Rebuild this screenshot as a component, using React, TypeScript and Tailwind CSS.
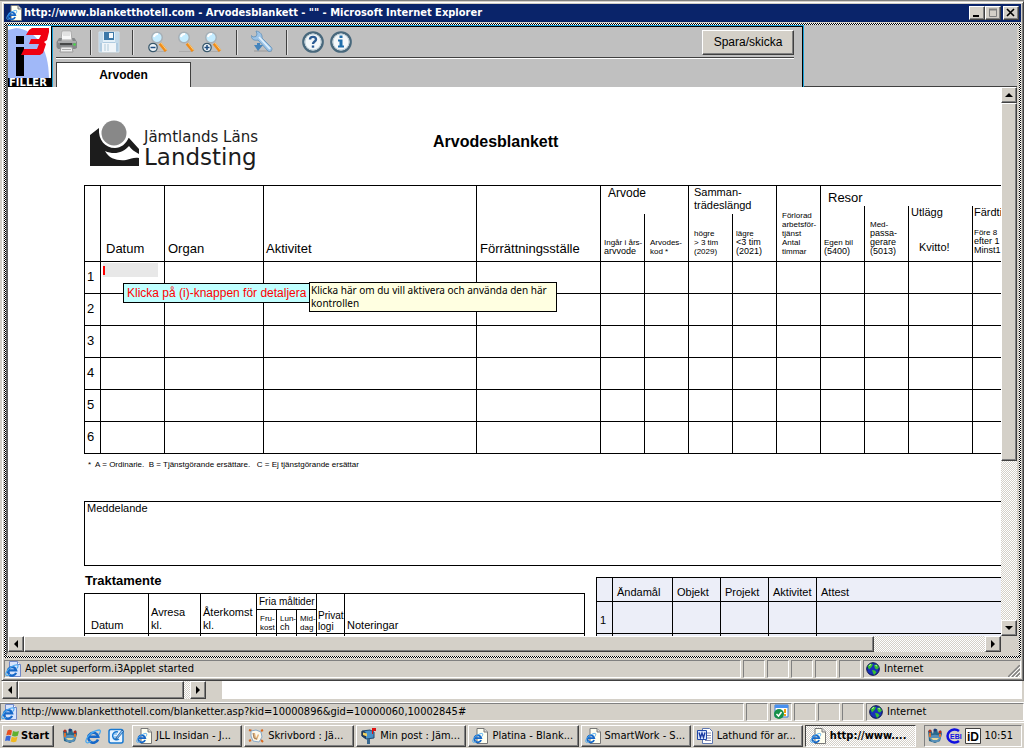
import { clsx } from 'clsx'
import type { ReactNode } from 'react'

const raised =
  'border border-t-white border-l-white border-r-[#404040] border-b-[#404040] bg-[#d4d0c8] shadow-[inset_-1px_-1px_0_#808080]'
const sunken = 'border border-t-[#808080] border-l-[#808080] border-r-white border-b-white'
const hatch = 'bg-[repeating-conic-gradient(#000_0_25%,#fff_0_50%)] bg-[length:2px_2px]'
const track = 'bg-[repeating-conic-gradient(#d4d0c8_0_25%,#fff_0_50%)] bg-[length:2px_2px]'
const cell = 'border-r border-b border-black p-0 font-normal text-left'

function IeIcon({ page = 'small' }: { page?: 'small' | 'large' | 'none' }) {
  return (
    <svg viewBox="0 0 16 16" className="size-4 shrink-0">
      {page === 'small' && (
        <>
          <path d="M5 .5h7l3.500 3.500v11.500H5z" fill="#fffff0" stroke="#777" />
          <path d="M12 .5V4h3.500" fill="#ddd" stroke="#777" />
        </>
      )}
      {page === 'large' && (
        <>
          <path d="M4.500.5h8l3 3v12h-11z" fill="#d8e4fc" stroke="#7088c8" />
          <path d="M12.500.5v3h3" fill="#fff" stroke="#7088c8" />
        </>
      )}
      <g transform={page === 'small' ? 'translate(0 4) scale(.7)' : page === 'large' ? 'translate(0 2) scale(.85)' : undefined}>
        <path d="M13 11.500A5 5 0 1 1 13.200 8.700H4.500" fill="none" stroke="#1668c8" strokeWidth="2.600" />
        <path
          d="M1.500 14.500C-1 12 6 3 14 2M14 2c2 0 1.500 2.500 0 4.500M1.500 14.500c1 .8 3-.2 4.500-1.500"
          fill="none"
          stroke="#48a8f0"
          strokeWidth="1.300"
        />
      </g>
    </svg>
  )
}

function Globe() {
  return (
    <svg viewBox="0 0 14 14" className="size-3.5 shrink-0">
      <circle cx="7" cy="7" r="6.300" fill="#1830b8" stroke="#081048" />
      <path d="M1.500 4L5 1.500l2 1L5.500 5 3 7.500zM8 3l3-.5 2 3-2 2-2-1zM6 8l3 .5 1.500 2L8 13l-1-2z" fill="#38c030" />
      <path d="M3 3.500l2-1M9.500 3.500l1.500.5" stroke="#c8f8b0" />
    </svg>
  )
}

function Msn() {
  return (
    <svg viewBox="0 0 16 16" className="size-4 shrink-0">
      <path d="M1 3l3-1 2 4 1-5h3l1 4 3-3 1 4-2 7-5 2-6-2z" fill="#28688c" />
      <circle cx="3" cy="3" r="1.500" fill="#b03020" />
      <circle cx="8" cy="2" r="1.500" fill="#203878" />
      <circle cx="13" cy="4" r="1.500" fill="#b82818" />
      <path d="M2 9c3-3 9-3 12 0l-2 5H5z" fill="#5890b8" />
      <path d="M4 10h8l-2 2H6z" fill="#e8d898" />
      <path d="M3 5v4M13 6v3" stroke="#d87030" strokeWidth="2" />
    </svg>
  )
}

function Notes() {
  return (
    <svg viewBox="0 0 16 16" className="size-4 shrink-0">
      <path d="M1 2l3 1M15 2l-2 1M1 13l2-1M15 14l-2-2" stroke="#d86820" strokeWidth="2" />
      <path d="M3 3l5-1 5 2 1 5-3 5-6-1-2-5z" fill="#fcf8ec" stroke="#88a8c8" />
      <path d="M5 5h2l1 5 2-4 1 1-2 5-3-1z" fill="#e0b078" />
      <path d="M5 5l1 5 3 1" fill="none" stroke="#a08060" />
    </svg>
  )
}

function Mailbox() {
  return (
    <svg viewBox="0 0 16 16" className="size-4 shrink-0">
      <path d="M2 3l8-1 4 2v6l-8 1-4-3z" fill="#4890c8" stroke="#204870" />
      <path d="M1.500 3.500C4 2 6 4 6 6v5L1.500 8z" fill="#203858" />
      <path d="M3 4.500l4 1v3L3 7z" fill="#f0d060" />
      <path d="M7 11h3v5H7z" fill="#386890" />
      <path d="M12 0h4v3h-3v3h-1z" fill="#e01010" />
    </svg>
  )
}

function Word() {
  return (
    <svg viewBox="0 0 16 16" className="size-4 shrink-0">
      <path d="M5.500.5h7l3 3v12h-10z" fill="#fff" stroke="#6078b0" />
      <path d="M8 5h6M8 7.500h6M8 10h6M8 12.500h6" stroke="#88a" />
      <path d="M.5 2.500h9v9h-9z" fill="#d8e4fc" stroke="#2048a8" />
      <path d="M2 4.500l1.500 5L5 5l1.500 4.500L8 4.500" fill="none" stroke="#1838a0" strokeWidth="1.300" />
    </svg>
  )
}

function WindowsFlag() {
  return (
    <svg viewBox="0 0 16 16" className="size-4 shrink-0">
      <path d="M3.500 2.500C5 1.500 6.500 1.800 8 2.600L7 7.300C5.500 6.500 4 6.500 2.300 7.300z" fill="#e85020" />
      <path d="M9 3c2 1 4 1 6 0l-1.200 4.800c-2 1-4 .8-5.800 0z" fill="#60b030" />
      <path d="M2 8.300c1.600-.8 3.300-.8 4.800 0L5.700 13c-1.600-.8-3.200-.8-4.700 0z" fill="#3868d8" />
      <path d="M7.800 8.800c2 .9 3.800.9 5.700 0l-1.200 4.700c-2 1-3.800.8-5.600 0z" fill="#f0b820" />
    </svg>
  )
}

function Desktop() {
  return (
    <svg viewBox="0 0 16 16" className="size-4 shrink-0">
      <rect x="1" y="1.500" width="14" height="13.500" rx="2" fill="#e8f4ff" stroke="#1878d0" strokeWidth="1.500" />
      <path d="M10 4a4 4 0 1 0 1 7" fill="none" stroke="#1878d0" strokeWidth="1.500" />
      <path d="M6 6h3M6 9h4" stroke="#48a0e8" />
      <path d="M8 10l6-8 1.500 1.500-6 7-2 .5z" fill="#80c0f8" stroke="#104888" strokeWidth=".7" />
    </svg>
  )
}

function Printer() {
  return (
    <svg viewBox="0 0 22 24" className="h-6 w-[22px]">
      <path d="M6 1h9l1 9H5z" fill="#f8f8f8" stroke="#aaa" />
      <path d="M7 3h7M7 5h7" stroke="#ccc" />
      <path d="M3 8h3l-.5 3h11L16 8h2.500l2.500 4v6l-2 1H2l-1.500-2v-5z" fill="#858789" />
      <path d="M2 12h18" stroke="#d0d0d0" />
      <path d="M4 14h12" stroke="#333" strokeWidth="1.500" />
      <circle cx="18.500" cy="14.500" r="1.300" fill="#48d848" />
      <path d="M5 17h11l1 5H4z" fill="#eee" stroke="#999" />
      <path d="M6 19.500h9" stroke="#aaa" />
    </svg>
  )
}

function Floppy() {
  return (
    <svg viewBox="0 0 22 22" className="size-[22px]">
      <path d="M1 1h20v20H1z" fill="#b0cbe0" stroke="#d4e5f0" />
      <path d="M2 1h3v11H2zM17 1h3v11h-3z" fill="#c4daea" />
      <path d="M5 1h12v10H5z" fill="#e4f0f8" />
      <path d="M6 1h10v8H6z" fill="#3d78a8" />
      <path d="M11 2h4v5h-4z" fill="#f4f8fb" />
      <path d="M4 12h14v9H4z" fill="#f0f5f9" />
      <path d="M7 13v7M10 13v7" stroke="#d0e0ea" strokeWidth="2" />
    </svg>
  )
}

function Magnifier({ mode }: { mode?: 'out' | 'in' }) {
  return (
    <svg viewBox="0 0 20 22" className="h-[22px] w-5">
      <path d="M4 20.500h14" stroke="#999" opacity=".5" />
      <path d="M12 12.500l6 7.500" stroke="#f08c18" strokeWidth="3.200" />
      <path d="M13 12l5.500 7" stroke="#fcd080" strokeWidth="1" />
      <circle cx="9" cy="6.500" r="5.300" fill="#c4ecff" stroke="#a8b0b6" strokeWidth="1.500" />
      <path d="M6 6a3.500 3.500 0 0 1 4-3" stroke="#fff" strokeWidth="2" fill="none" />
      {mode && (
        <>
          <circle cx="5" cy="16.500" r="4.200" fill="#eef4f8" stroke="#38586c" strokeWidth="1.300" />
          <path d="M2.500 16.500h5" stroke="#1c4c80" strokeWidth="1.500" />
        </>
      )}
      {mode === 'in' && <path d="M5 14v5" stroke="#1c4c80" strokeWidth="1.500" />}
    </svg>
  )
}

function Tools() {
  return (
    <svg viewBox="0 0 24 24" className="size-6">
      <path d="M4 21h18" stroke="#999" opacity=".5" strokeWidth="2" />
      <path
        d="M6 1l1 3-1 2.500L3 7 1.500 5.500C1 9 4 11 8 10l10 11c2.500 1.500 5-1 3.500-3.500L12 8c.5-3-1.500-6.500-6-7z"
        fill="#9cc4e8"
        stroke="#5f8fb8"
        strokeWidth=".8"
      />
      <path d="M9 7l11 12" stroke="#e0f0fc" strokeWidth="1.800" />
      <path d="M4 15h3v-2h3v2h3l-5 6z" fill="#4484bc" />
    </svg>
  )
}

function RoundIcon({ kind }: { kind: 'help' | 'info' }) {
  return (
    <svg viewBox="0 0 22 22" className="size-[22px]">
      <circle cx="11" cy="11" r="9.700" fill="#f4f8fa" stroke="#48687c" strokeWidth="2.300" />
      <circle cx="11" cy="11" r="8" fill="none" stroke="#c0d0d8" />
      {kind === 'help' ? (
        <g fill="none" stroke="#2c5c94" strokeWidth="2.400">
          <path d="M8 8.500C8 5 14 5 14 8.500c0 2-3 2-3 4.500" />
          <path d="M11 14.500v2.200" />
        </g>
      ) : (
        <path d="M9.500 4.500h3v2.500h-3zM8 8.500h4.500v6H14v2H8v-2h1.500v-4H8z" fill="#1f6fac" />
      )}
    </svg>
  )
}

function FillerLogo() {
  return (
    <svg viewBox="0 0 43 61" className="h-[61px] w-[43px] shrink-0">
      <path d="M0 0h43v61H0z" fill="#a0b8f8" />
      <path d="M0 0h43v52h-2C41 22 28 4 8 2L0 4z" fill="#fff" />
      <path d="M8 10h8v8H8zM8 21h8v29H8z" fill="#000" />
      <path
        d="M18 9l3-5 3-2h17v4l-2 8-3 2 2 2-3 9-3 2H13l3-6h13l2-5H21l2-5h8l2-4z"
        fill="#f00010"
      />
      <path d="M0 52h43v9H0z" fill="#000" />
      <text x="1" y="60" fill="#fff" fontSize="10" fontWeight="700" fontFamily="DejaVu Sans, sans-serif">
        FILLER
      </text>
    </svg>
  )
}

function CountyLogo() {
  return (
    <svg viewBox="0 0 50 46" className="h-[46px] w-[50px] shrink-0">
      <path d="M0 15l9-7 15 8 15 2 10 11v17H0z" fill="#1c1c1c" />
      <path d="M9 0h30v17c-3 7-8 11-14 11C15 28 8 20 9 8z" fill="#fff" />
      <path d="M15 31c9 4 18 2 24-5 2 3 6 6 10 8v4c-5-1-8 1-13 2-8 1-17-1-21-9z" fill="#fff" />
      <circle cx="24" cy="13" r="12.500" fill="#888" />
    </svg>
  )
}

function Arrow({ dir }: { dir: 'left' | 'right' | 'up' | 'down' }) {
  return (
    <button aria-label={`Scroll ${dir}`} className={clsx(raised, 'flex min-h-4 w-4 shrink-0 items-center justify-center')}>
      <svg
        viewBox="0 0 8 8"
        className={clsx('size-2', {
          'rotate-180': dir === 'right',
          'rotate-90': dir === 'up',
          '-rotate-90': dir === 'down',
        })}
      >
        <path d="M6 0v8L2 4z" />
      </svg>
    </button>
  )
}

function StatusBar({ children, badge, grip }: { children: ReactNode; badge?: boolean; grip?: boolean }) {
  return (
    <div className="flex h-[18px] shrink-0 gap-[2px]">
      <div className={clsx(sunken, 'flex min-w-0 flex-1 items-center gap-1')}>
        <IeIcon page="large" />
        <span className="truncate">{children}</span>
      </div>
      {[0, 1, 2, 3, 4].map((i) => (
        <div key={i} className={clsx(sunken, 'flex w-[22px] items-center justify-center')}>
          {badge && i === 1 && (
            <svg viewBox="0 0 16 16" className="size-4">
              <path d="M2 1h13v12H2z" fill="#fff" stroke="#3878d0" />
              <path d="M2 1h13v3H2z" fill="#4890f0" />
              <path d="M12 5v4M12 10v2" stroke="#f0a010" strokeWidth="2" />
              <circle cx="6" cy="10" r="5" fill="#189048" />
              <path d="M3.500 10l2 2 3-4" fill="none" stroke="#fff" strokeWidth="1.500" />
            </svg>
          )}
        </div>
      ))}
      <div className={clsx(sunken, 'flex w-[158px] items-center gap-1 pl-0.5')}>
        <Globe />
        <span>Internet</span>
        {grip && (
          <svg viewBox="0 0 12 12" className="ml-auto size-3 self-end">
            <path d="M0 12L12 0M4 12l8-8M8 12l4-4" stroke="#808080" strokeWidth="1.500" />
            <path d="M2 12L12 2M6 12l6-6M10 12l2-2" stroke="#fff" />
          </svg>
        )}
      </div>
    </div>
  )
}

function Separator() {
  return <div className="h-[25px] w-[2px] shrink-0 border-r border-l border-l-[#404040] border-r-[#e0e0e0]" />
}

function Toolbar() {
  return (
    <div className="flex h-[62px] shrink-0 bg-[#c0c0c0]">
      <div className="flex w-[796px] border-t border-r border-[#18a0d8]">
        <FillerLogo />
        <div className="flex min-w-0 flex-1 flex-col border-t border-r border-l border-black shadow-[inset_1px_0_0_#18a0d8]">
          <div className="mr-2 ml-1 flex h-[31px] shrink-0 items-center border-b border-[#404040] shadow-[0_1px_0_#fff]">
            <button aria-label="Skriv ut">
              <Printer />
            </button>
            <div className="ml-3 flex items-center gap-1.5">
              <Separator />
              <button aria-label="Spara">
                <Floppy />
              </button>
            </div>
            <div className="ml-3 flex items-center gap-3.5">
              <Separator />
              <div className="flex gap-[7px]">
                <button aria-label="Zooma ut">
                  <Magnifier mode="out" />
                </button>
                <button aria-label="Normal storlek">
                  <Magnifier />
                </button>
                <button aria-label="Zooma in">
                  <Magnifier mode="in" />
                </button>
              </div>
            </div>
            <div className="ml-3.5 flex items-center gap-3">
              <Separator />
              <button aria-label="Verktyg">
                <Tools />
              </button>
              <Separator />
            </div>
            <div className="ml-3.5 flex items-center gap-1.5">
              <button aria-label="Hjälp">
                <RoundIcon kind="help" />
              </button>
              <button aria-label="Information">
                <RoundIcon kind="info" />
              </button>
            </div>
            <button className={clsx(raised, "ml-auto h-[25px] w-[92px] font-['Liberation_Sans',sans-serif] text-xs")}>
              Spara/skicka
            </button>
          </div>
          <div className="mt-1 ml-1 flex flex-1">
            <button className="w-[135px] border-t border-r border-l border-[#404040] bg-white font-['Liberation_Sans',sans-serif] text-xs font-bold">
              Arvoden
            </button>
          </div>
        </div>
      </div>
      <div className="flex-1 border-b border-[#404040]" />
    </div>
  )
}

function Lines({ items }: { items: [string, 's' | 'm'][] }) {
  return (
    <>
      {items.map(([text, size]) => (
        <span key={text} className={clsx('block whitespace-nowrap leading-[9px]', size === 's' ? 'text-[8px]' : 'text-[9px]')}>
          {text}
        </span>
      ))}
    </>
  )
}

const label = 'border-r border-b border-black p-0 pb-[5px] text-left align-bottom font-normal'

function FeeTable() {
  return (
    <table className="w-[1061px] table-fixed border-separate border-spacing-0 border-t border-l border-black text-[13px]">
      <colgroup>
        <col className="w-[16px]" />
        <col className="w-[64px]" />
        <col className="w-[99px]" />
        <col className="w-[213px]" />
        <col className="w-[124px]" />
        <col className="w-[44px]" />
        <col className="w-[44px]" />
        <col className="w-[44px]" />
        <col className="w-[44px]" />
        <col className="w-[44px]" />
        <col className="w-[44px]" />
        <col className="w-[44px]" />
        <col className="w-[64px]" />
        <col />
      </colgroup>
      <thead>
        <tr className="h-[20px]">
          <th rowSpan={3} className={cell} />
          <th rowSpan={3} className={clsx(label, 'pl-[5px]')}>Datum</th>
          <th rowSpan={3} className={clsx(label, 'pl-[3px]')}>Organ</th>
          <th rowSpan={3} className={clsx(label, 'pl-0.5')}>Aktivitet</th>
          <th rowSpan={3} className={clsx(label, 'pl-[3px]')}>Förrättningsställe</th>
          <th rowSpan={2} colSpan={2} className="border-r border-black p-0 pl-[7px] text-left align-top text-xs leading-[14px] font-normal">
            Arvode
          </th>
          <th rowSpan={2} colSpan={2} className="border-r border-black p-0 pl-[5px] text-left align-top text-[11px] leading-[13px] font-normal">
            Samman-
            <br />
            trädeslängd
          </th>
          <th rowSpan={3} className={clsx(label, 'pl-[5px]')}>
            <Lines items={[['Förlorad', 's'], ['arbetsför-', 's'], ['tjänst', 's'], ['Antal', 's'], ['timmar', 's']]} />
          </th>
          <th colSpan={4} className="p-0 pl-[7px] text-left align-bottom text-[13px] leading-4 font-normal">
            Resor
          </th>
        </tr>
        <tr className="h-[8px]">
          <th rowSpan={2} className={clsx(label, 'pl-[3px]')}>
            <Lines items={[['Egen bil', 's'], ['(5400)', 'm']]} />
          </th>
          <th rowSpan={2} className={clsx(label, 'pl-[5px]')}>
            <Lines items={[['Med-', 's'], ['passa-', 'm'], ['gerare', 'm'], ['(5013)', 'm']]} />
          </th>
          <th rowSpan={2} className="border-r border-b border-black p-0 pl-0.5 text-left align-top text-[11px] leading-[13px] font-normal">
            Utlägg
            <span className="mt-[22px] block pl-2">Kvitto!</span>
          </th>
          <th rowSpan={2} className="border-r border-b border-black p-0 pl-px text-left align-top text-[11px] leading-[13px] font-normal">
            <span className="mb-[9px] block">Färdti</span>
            <Lines items={[['Före 8', 's'], ['efter 1', 'm'], ['Minst1', 'm']]} />
          </th>
        </tr>
        <tr className="h-[48px]">
          <th className={clsx(label, 'pl-[3px]')}>
            <Lines items={[['Ingår i års-', 's'], ['arvvode', 'm']]} />
          </th>
          <th className={clsx(label, 'pl-[5px]')}>
            <Lines items={[['Arvodes-', 's'], ['kod *', 's']]} />
          </th>
          <th className={clsx(label, 'pl-[5px]')}>
            <Lines items={[['högre', 's'], ['> 3 tim', 's'], ['(2029)', 's']]} />
          </th>
          <th className={clsx(label, 'pl-[3px]')}>
            <Lines items={[['lägre', 's'], ['<3 tim', 'm'], ['(2021)', 'm']]} />
          </th>
        </tr>
      </thead>
      <tbody>
        {[1, 2, 3, 4, 5, 6].map((row) => (
          <tr key={row} className="h-[32px]">
            <th className="border-r border-b border-black p-0 pb-0.5 pl-0.5 text-left align-middle font-normal">{row}</th>
            {Array.from({ length: 13 }, (_, i) => (
              <td key={i} className={clsx(cell, 'align-top')}>
                {row === 1 && i === 0 && <DateField />}
              </td>
            ))}
          </tr>
        ))}
      </tbody>
    </table>
  )
}

function DateField() {
  return (
    <div className="relative h-[31px] pt-px pl-0.5">
      <input aria-label="Datum" className="block h-3.5 w-[55px] bg-[#e8e8e8] outline-none" />
      <div className="absolute top-1 left-0.5 h-[9px] w-[2px] bg-[#ff0000]" />
      <div className="absolute top-[21px] left-[22px] z-10 h-5 w-[200px] border border-black bg-[#c0ffff] pl-[3px] text-xs leading-[18px] whitespace-nowrap text-[#ff0000]">
        Klicka på (i)-knappen för detaljera
      </div>
      <div
        role="tooltip"
        className="absolute top-5 left-[208px] z-20 h-[30px] w-[248px] border border-black bg-[#ffffe1] pt-px pl-px font-['Noto_Sans',sans-serif] text-[10px] leading-[13px] whitespace-nowrap"
      >
        Klicka här om du vill aktivera och använda den här
        <br />
        kontrollen
      </div>
    </div>
  )
}

function AllowanceTable() {
  const head = 'border-r border-b border-black p-0 pb-px text-left align-bottom font-normal'
  return (
    <table className="w-[501px] table-fixed border-separate border-spacing-0 border-t border-l border-black text-[11px] leading-[13px]">
      <colgroup>
        <col className="w-[64px]" />
        <col className="w-[52px]" />
        <col className="w-[56px]" />
        <col className="w-[20px]" />
        <col className="w-[20px]" />
        <col className="w-[20px]" />
        <col className="w-[28px]" />
        <col />
      </colgroup>
      <thead>
        <tr className="h-[16px]">
          <th rowSpan={2} className={clsx(head, 'pl-1.5')}>Datum</th>
          <th rowSpan={2} className={clsx(head, 'pl-0.5')}>Avresa<br />kl.</th>
          <th rowSpan={2} className={clsx(head, 'pl-0.5')}>Återkomst<br />kl.</th>
          <th colSpan={3} className={clsx(head, 'pl-0.5 text-[10px]')}>Fria måltider</th>
          <th rowSpan={2} className={clsx(head, 'pl-px text-[10px] leading-[11px]')}>Privat<br />logi</th>
          <th rowSpan={2} className={clsx(head, 'pl-0.5')}>Noteringar</th>
        </tr>
        <tr className="h-[24px]">
          <th className={clsx(head, 'pl-[3px]')}><Lines items={[['Fru-', 's'], ['kost', 's']]} /></th>
          <th className={clsx(head, 'pl-[3px]')}><Lines items={[['Lun-', 's'], ['ch', 'm']]} /></th>
          <th className={clsx(head, 'pl-[3px]')}><Lines items={[['Mid-', 's'], ['dag', 's']]} /></th>
        </tr>
      </thead>
      <tbody>
        <tr className="h-[32px]">
          {Array.from({ length: 8 }, (_, i) => <td key={i} className={cell} />)}
        </tr>
      </tbody>
    </table>
  )
}

function AccountTable() {
  const head = 'border-r border-b border-black p-0 pt-1 text-left font-normal'
  return (
    <table className="w-[549px] table-fixed border-separate border-spacing-0 border-t border-l border-black bg-[#eceef8] text-[11px]">
      <colgroup>
        <col className="w-[16px]" />
        <col className="w-[60px]" />
        <col className="w-[48px]" />
        <col className="w-[48px]" />
        <col className="w-[48px]" />
        <col />
      </colgroup>
      <thead>
        <tr className="h-[24px]">
          <th className={cell} />
          {['Ändamål', 'Objekt', 'Projekt', 'Aktivitet', 'Attest'].map((name) => (
            <th key={name} className={clsx(head, 'pl-1')}>{name}</th>
          ))}
        </tr>
      </thead>
      <tbody>
        {['1', ''].map((row) => (
          <tr key={row} className="h-[32px]">
            <th className={clsx(head, 'pl-[3px]')}>{row}</th>
            {Array.from({ length: 5 }, (_, i) => <td key={i} className={cell} />)}
          </tr>
        ))}
      </tbody>
    </table>
  )
}

function Form() {
  return (
    <main className="min-w-0 flex-1 overflow-hidden bg-white pl-[76px] font-['Liberation_Sans',sans-serif]">
      <div className="w-[1061px]">
        <header className="flex h-[98px] pt-[33px]">
          <div className="flex w-[349px] gap-1 pl-1.5">
            <CountyLogo />
            <div className="pt-2 font-['DejaVu_Sans',sans-serif] text-[#1c1c1c]">
              <div className="text-[15px] leading-[18px]">Jämtlands Läns</div>
              <div className="text-[23px] leading-[22px]">Landsting</div>
            </div>
          </div>
          <h1 className="pt-2.5 text-base font-bold">Arvodesblankett</h1>
        </header>
        <FeeTable />
        <p className="h-[47px] pt-1.5 pl-1 text-[8px] leading-[10px] whitespace-pre">
          {'*  A = Ordinarie.  B = Tjänstgörande ersättare.   C = Ej tjänstgörande ersättar'}
        </p>
        <label className="flex h-[65px] flex-col border border-black pl-0.5 text-[11px] leading-[13px]">
          Meddelande
          <textarea className="w-full flex-1 resize-none outline-none" />
        </label>
        <div className="flex gap-[11px]">
          <section>
            <h2 className="h-[27px] pt-1.5 pl-px text-[13px] leading-[18px] font-bold">Traktamente</h2>
            <AllowanceTable />
          </section>
          <div className="pt-[11px]">
            <AccountTable />
          </div>
        </div>
      </div>
    </main>
  )
}

function PopupWindow() {
  return (
    <div className="ml-px flex min-h-0 flex-1 flex-col border border-t-[#d4d0c8] border-r-[#404040] border-b-[#404040] border-l-[#d4d0c8] bg-[#d4d0c8] p-[2px] shadow-[inset_1px_1px_0_#fff,inset_-1px_-1px_0_#808080]">
      <div className="flex h-[18px] shrink-0 items-center bg-[#0a246a] px-0.5 text-white">
        <IeIcon />
        <h1 className="ml-0.5 flex-1 truncate text-[11px] font-bold">
          http://www.blanketthotell.com - Arvodesblankett - "" - Microsoft Internet Explorer
        </h1>
        <button aria-label="Minimera" className={clsx(raised, 'h-3.5 w-4')}>
          <svg viewBox="0 0 14 12">
            <path d="M3 8h6v2H3z" />
          </svg>
        </button>
        <button aria-label="Maximera" className={clsx(raised, 'h-3.5 w-4')}>
          <svg viewBox="0 0 14 12">
            <path d="M3.500 2.500h7v7h-7z" fill="none" stroke="#808080" />
            <path d="M3 2.500h8" stroke="#808080" strokeWidth="2" />
          </svg>
        </button>
        <button aria-label="Stäng" className={clsx(raised, 'ml-0.5 h-3.5 w-4')}>
          <svg viewBox="0 0 14 12">
            <path d="M3 2l7 7M10 2l-7 7" stroke="#000" strokeWidth="1.600" />
          </svg>
        </button>
      </div>
      <div className={clsx(hatch, 'mt-px flex min-h-0 flex-1 flex-col p-[2px]')}>
        <div className="flex min-h-0 flex-1 flex-col border-r-2 border-b-4 border-l-2 border-r-[#d4d0c8] border-b-[#d4d0c8] border-l-[#606060]">
          <Toolbar />
          <div className="flex min-h-0 flex-1">
            <Form />
            <div className={clsx(track, 'flex w-4 flex-col')}>
              <Arrow dir="up" />
              <div className={clsx(raised, 'flex-[357]')} />
              <div className="flex-[160]" />
              <Arrow dir="down" />
            </div>
          </div>
          <div className="flex h-4 shrink-0 bg-[#d4d0c8]">
            <div className={clsx(track, 'flex flex-1')}>
              <Arrow dir="left" />
              <div className={clsx(raised, 'flex-[850]')} />
              <div className="flex-[111]" />
              <Arrow dir="right" />
            </div>
            <div className="w-4" />
          </div>
        </div>
      </div>
      <div className="pt-[2px]">
        <StatusBar grip>Applet superform.i3Applet started</StatusBar>
      </div>
    </div>
  )
}

const tasks = [
  { icon: <IeIcon />, title: 'JLL Insidan - J...' },
  { icon: <Notes />, title: 'Skrivbord : Jä...' },
  { icon: <Mailbox />, title: 'Min post : Jäm...' },
  { icon: <IeIcon />, title: 'Platina - Blank...' },
  { icon: <IeIcon />, title: 'SmartWork - S...' },
  { icon: <Word />, title: 'Lathund för ar...' },
]

function Taskbar() {
  return (
    <footer className="flex h-[26px] shrink-0 items-center border-t border-white pr-0.5 pl-0.5">
      <button className={clsx(raised, 'flex h-[22px] w-[52px] shrink-0 items-center gap-px pl-px font-bold')}>
        <WindowsFlag />
        Start
      </button>
      <div className="flex w-[78px] shrink-0 justify-between px-2">
        <button aria-label="Messenger"><Msn /></button>
        <button aria-label="Internet Explorer"><IeIcon page="none" /></button>
        <button aria-label="Visa skrivbordet"><Desktop /></button>
      </div>
      <nav className="flex min-w-0 flex-1 gap-[2px]">
        {tasks.map((task) => (
          <button key={task.title} className={clsx(raised, 'flex h-[22px] min-w-0 flex-1 items-center gap-1 pl-[3px]')}>
            {task.icon}
            <span className="whitespace-nowrap">{task.title}</span>
          </button>
        ))}
        <button className={clsx(track, 'flex h-[22px] min-w-0 flex-1 items-center gap-1 border border-t-[#404040] border-r-white border-b-white border-l-[#404040] pl-1 font-bold')}>
          <IeIcon />
          <span className="whitespace-nowrap">http://www....</span>
        </button>
      </nav>
      <div className={clsx(sunken, 'ml-2 flex h-[22px] w-[98px] shrink-0 items-center gap-[3px] pl-0.5')}>
        <Msn />
        <svg viewBox="0 0 16 16" className="size-4 shrink-0">
          <path d="M13 3A7 6.500 0 1 0 13 13" fill="none" stroke="#1010e0" strokeWidth="2.500" />
          <text x="4" y="11" fontSize="7" fontWeight="700" fill="#1010e0" fontFamily="Liberation Sans, sans-serif">
            EBI
          </text>
        </svg>
        <svg viewBox="0 0 16 16" className="size-4 shrink-0">
          <path d="M.5.5h15v15H.5z" fill="#fff" stroke="#404040" />
          <text x="2" y="13" fontSize="12" fontWeight="700" fontFamily="Liberation Sans, sans-serif">
            iD
          </text>
        </svg>
        <time className="ml-auto pr-2">10:51</time>
      </div>
    </footer>
  )
}

export default function App() {
  return (
    <div className="flex h-screen flex-col overflow-hidden border-t border-[#808080] bg-[#d4d0c8] font-['DejaVu_Sans_Condensed','Noto_Sans',sans-serif] text-[11px] leading-[14px] text-black">
      <PopupWindow />
      <div className="flex h-[18px] shrink-0 pr-0.5 pl-0.5">
        <div className={clsx(track, 'flex w-[204px]')}>
          <Arrow dir="left" />
          <div className={clsx(raised, 'w-[166px]')} />
          <div className="flex-1" />
          <Arrow dir="right" />
        </div>
        <div className="w-4" />
        <div className="flex-1 bg-white" />
      </div>
      <div className="border-b border-[#d4d0c8] pt-[3px]">
        <div className="border-t border-white">
          <StatusBar badge>http://www.blanketthotell.com/blanketter.asp?kid=10000896&amp;gid=10000060,10002845#</StatusBar>
        </div>
      </div>
      <Taskbar />
    </div>
  )
}
